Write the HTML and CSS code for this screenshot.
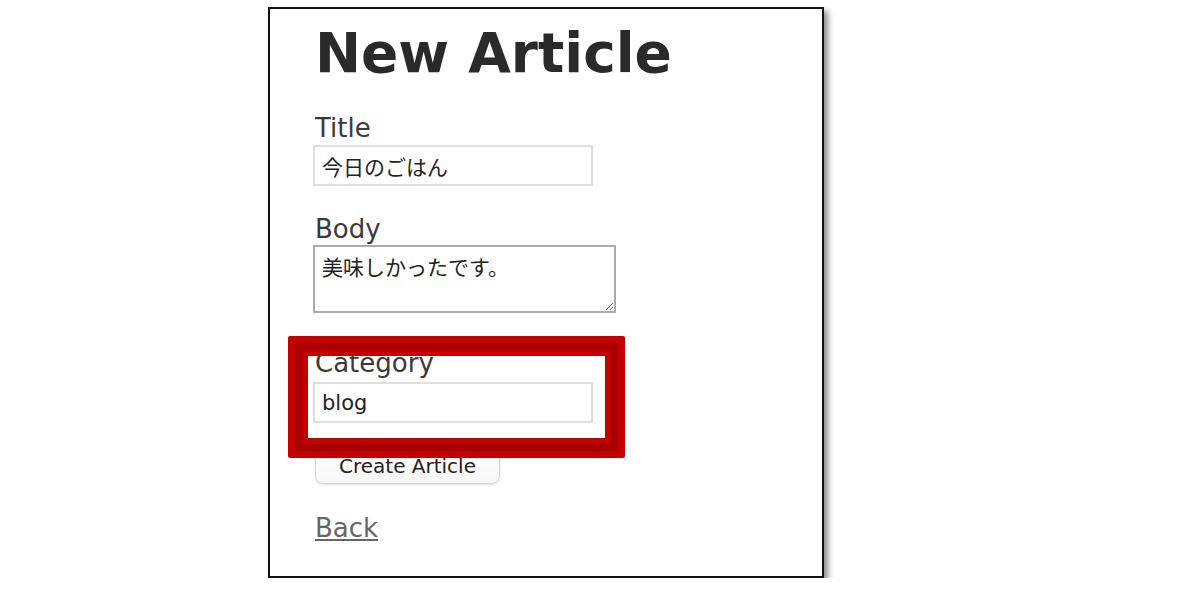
FILE: index.html
```html
<!DOCTYPE html>
<html>
<head>
    <meta charset="utf-8">
    <title>New Article</title>
    <link rel="stylesheet" href="styles.css">
</head>
<body>
    <div class="frame">
        <h1>New Article</h1>
        <form class="article-form">
            <div class="field field-title">
                <label for="articleTitle">Title</label>
                <input type="text" id="articleTitle" value="今日のごはん">
            </div>
            <div class="field field-body">
                <label for="articleBody">Body</label>
                <textarea id="articleBody">美味しかったです。</textarea>
            </div>
            <div class="field field-category">
                <label for="articleCategory">Category</label>
                <input type="text" id="articleCategory" value="blog">
            </div>
            <div class="actions">
                <button type="button" class="submit-button">Create Article</button>
            </div>
        </form>
        <a href="#" class="back-link">Back</a>
        <!-- highlight around the new field -->
        <div class="highlight"></div>
    </div>
</body>
</html>
```

FILE: styles.css
```css
body {
    margin: 0;
    background: #fff;
    font-family: "DejaVu Sans", Verdana, "Noto Sans CJK JP", sans-serif;
    color: #333;
}
.frame {
    position: relative;
    box-sizing: border-box;
    width: 556px;
    height: 571px;
    margin: 7px 0 0 268px;
    padding-left: 45px;
    border: 2px solid #111;
    background: #fff;
    box-shadow: 4px 4px 6px rgba(0, 0, 0, 0.45);
}
h1 {
    margin: 14px 0 0;
    font-size: 55px;
    line-height: 60px;
    font-weight: bold;
    color: #2a2a2a;
}
.article-form {
    margin: 0;
}
.field label {
    display: block;
    font-size: 26px;
    line-height: 30px;
    color: #3a3a3a;
}
.field-title {
    margin-top: 30px;
}
.field-body {
    margin-top: 28px;
}
.field-category {
    margin-top: 35px;
}
.field-title label {
    margin-bottom: 2px;
}
.field-body label {
    margin-bottom: 1px;
}
.field-category label {
    margin-bottom: 4px;
}
input[type="text"] {
    display: block;
    box-sizing: border-box;
    width: 280px;
    height: 41px;
    margin-left: -2px;
    padding: 0 7px;
    border: 2px solid #dedede;
    font-family: "DejaVu Sans", "Noto Sans CJK JP", sans-serif;
    font-size: 21px;
    color: #222;
    outline: none;
}
textarea {
    display: block;
    box-sizing: border-box;
    width: 303px;
    height: 68px;
    margin-left: -2px;
    padding: 8px 7px;
    border: 2px solid #ababab;
    font-family: "DejaVu Sans", "Noto Sans CJK JP", sans-serif;
    font-size: 21px;
    line-height: 26px;
    color: #222;
    outline: none;
}
.actions {
    margin-top: 25px;
}
.submit-button {
    box-sizing: border-box;
    height: 36px;
    padding: 0 23px;
    border: 1px solid #d6d6d6;
    border-radius: 8px;
    background: linear-gradient(#fff, #f7f7f7);
    box-shadow: 0 1px 2px rgba(0, 0, 0, 0.12);
    font-family: "DejaVu Sans", sans-serif;
    font-size: 20px;
    color: #222;
}
.back-link {
    display: inline-block;
    margin-top: 29px;
    font-size: 26px;
    line-height: 30px;
    color: #666;
    text-decoration: underline;
}
.highlight {
    position: absolute;
    left: 18px;
    top: 327px;
    box-sizing: border-box;
    width: 337px;
    height: 122px;
    border: 7px solid #c20000;
    box-shadow: inset 0 0 0 7px #a80000, inset 0 0 0 13px #c20000;
    border-radius: 2px;
}
```
